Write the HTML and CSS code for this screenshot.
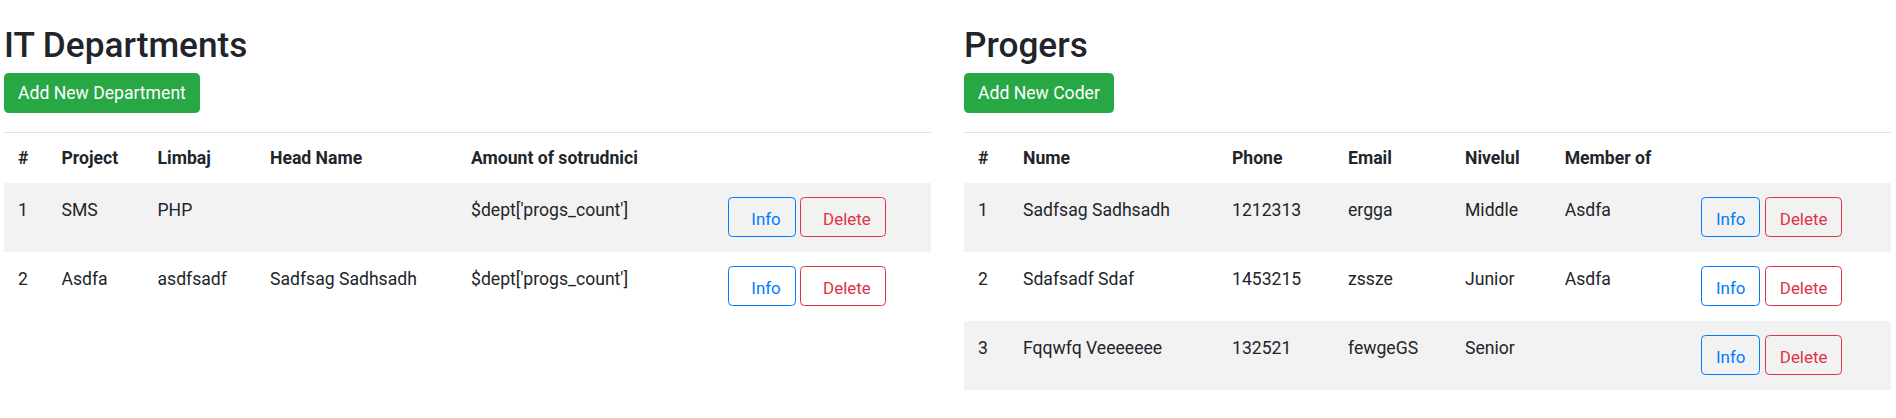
FILE: index.html
```html
<!DOCTYPE html>
<html lang="en">
<head>
<meta charset="utf-8">
<title>IT Departments &amp; Progers</title>
<link rel="stylesheet" href="styles.css">
</head>
<body>
<div class="page">
  <section class="panel">
    <h1 class="title">IT Departments</h1>
    <div class="toolbar"><button class="btn btn-success">Add New Department</button></div>
    <table class="grid grid-dept">
      <colgroup>
        <col class="d1"><col class="d2"><col class="d3"><col class="d4"><col class="d5"><col class="d6">
      </colgroup>
      <thead>
        <tr><th>#</th><th>Project</th><th>Limbaj</th><th>Head Name</th><th>Amount of sotrudnici</th><th></th></tr>
      </thead>
      <tbody>
        <tr>
          <td>1</td><td>SMS</td><td>PHP</td><td></td><td>$dept['progs_count']</td>
          <td class="actions actions-center"><button class="btn btn-sm-text btn-outline-primary btn-wide">Info</button> <button class="btn btn-sm-text btn-outline-danger btn-wide">Delete</button></td>
        </tr>
        <tr>
          <td>2</td><td>Asdfa</td><td>asdfsadf</td><td>Sadfsag Sadhsadh</td><td>$dept['progs_count']</td>
          <td class="actions actions-center"><button class="btn btn-sm-text btn-outline-primary btn-wide">Info</button> <button class="btn btn-sm-text btn-outline-danger btn-wide">Delete</button></td>
        </tr>
      </tbody>
    </table>
  </section>
  <section class="panel">
    <h1 class="title">Progers</h1>
    <div class="toolbar"><button class="btn btn-success">Add New Coder</button></div>
    <table class="grid grid-coders">
      <colgroup>
        <col class="c1"><col class="c2"><col class="c3"><col class="c4"><col class="c5"><col class="c6"><col class="c7">
      </colgroup>
      <thead>
        <tr><th>#</th><th>Nume</th><th>Phone</th><th>Email</th><th>Nivelul</th><th>Member of</th><th></th></tr>
      </thead>
      <tbody>
        <tr>
          <td>1</td><td>Sadfsag Sadhsadh</td><td>1212313</td><td>ergga</td><td>Middle</td><td>Asdfa</td>
          <td class="actions"><button class="btn btn-sm-text btn-outline-primary">Info</button> <button class="btn btn-sm-text btn-outline-danger">Delete</button></td>
        </tr>
        <tr>
          <td>2</td><td>Sdafsadf Sdaf</td><td>1453215</td><td>zssze</td><td>Junior</td><td>Asdfa</td>
          <td class="actions"><button class="btn btn-sm-text btn-outline-primary">Info</button> <button class="btn btn-sm-text btn-outline-danger">Delete</button></td>
        </tr>
        <tr>
          <td>3</td><td>Fqqwfq Veeeeeee</td><td>132521</td><td>fewgeGS</td><td>Senior</td><td></td>
          <td class="actions"><button class="btn btn-sm-text btn-outline-primary">Info</button> <button class="btn btn-sm-text btn-outline-danger">Delete</button></td>
        </tr>
      </tbody>
    </table>
  </section>
</div>
</body>
</html>
```
FILE: styles.css
```css
html, body {
  margin: 0;
  padding: 0;
  background: #fff;
}

body {
  font-family: Roboto, "Liberation Sans", Arial, sans-serif;
  font-size: 17.6px;
  line-height: 26px;
  color: #212529;
}

.page {
  display: flex;
  gap: 33px;
  padding: 0 5px 0 4px;
}

.panel {
  flex: 1 1 0;
  min-width: 0;
}

.title {
  margin: 24px 0 7px;
  font-size: 35.2px;
  line-height: 42px;
  font-weight: 500;
  color: #212529;
}

.toolbar {
  display: flex;
  margin-bottom: 19px;
}

.btn {
  display: inline-block;
  font-family: inherit;
  font-size: 17.6px;
  line-height: 26px;
  font-weight: 400;
  padding: 6px 13px;
  border: 1px solid transparent;
  border-radius: 4.4px;
  background: transparent;
  cursor: pointer;
  vertical-align: middle;
}

.btn-sm-text {
  font-size: 16.9px;
  padding: 8px 14px 4px;
}

.btn-success {
  background: #28a745;
  border-color: #28a745;
  color: #fff;
}

.btn-outline-primary {
  color: #007bff;
  border-color: #007bff;
}

.btn-outline-danger {
  color: #dc3545;
  border-color: #dc3545;
}

.btn-wide {
  padding-left: 22px;
}

.grid {
  width: 100%;
  border-collapse: collapse;
  table-layout: fixed;
}

.grid th {
  text-align: left;
  font-weight: 700;
  padding: 12px 14px;
  border-top: 1px solid #dee2e6;
  vertical-align: bottom;
  white-space: nowrap;
}

.grid td {
  padding: 14px 14px 15px;
  vertical-align: top;
  white-space: nowrap;
}

.grid tbody tr:nth-child(odd) {
  background: #f2f2f2;
}

.actions-center {
  text-align: center;
}

.d1 { width: 43.5px; }
.d2 { width: 96px; }
.d3 { width: 112.5px; }
.d4 { width: 201px; }
.d5 { width: 226px; }
.d6 { width: 248px; }

.c1 { width: 45px; }
.c2 { width: 209px; }
.c3 { width: 116px; }
.c4 { width: 117px; }
.c5 { width: 99.7px; }
.c6 { width: 136.3px; }
.c7 { width: 204px; }
```
